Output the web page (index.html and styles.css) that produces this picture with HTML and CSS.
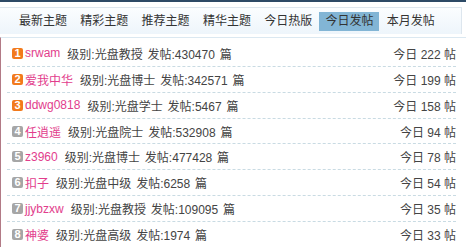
FILE: index.html
```html
<!DOCTYPE html>
<html lang="zh-CN">
<head>
    <meta charset="UTF-8">
    <title>今日发帖</title>
    <link rel="stylesheet" href="styles.css">
</head>
<body>
    <div class="topline"></div>
    <div class="tabs">
        <span class="tab">最新主题</span>
        <span class="tab">精彩主题</span>
        <span class="tab">推荐主题</span>
        <span class="tab">精华主题</span>
        <span class="tab">今日热版</span>
        <span class="tab active">今日发帖</span>
        <span class="tab">本月发帖</span>
    </div>
    <ul class="rank">
        <li><span class="num top">1</span><a class="name">srwam</a><span class="info">级别:光盘教授 发帖:430470 篇</span><span class="today">今日 222 帖</span></li>
        <li><span class="num top">2</span><a class="name">爱我中华</a><span class="info">级别:光盘博士 发帖:342571 篇</span><span class="today">今日 199 帖</span></li>
        <li><span class="num top">3</span><a class="name">ddwg0818</a><span class="info">级别:光盘学士 发帖:5467 篇</span><span class="today">今日 158 帖</span></li>
        <li><span class="num">4</span><a class="name">任逍遥</a><span class="info">级别:光盘院士 发帖:532908 篇</span><span class="today">今日 94 帖</span></li>
        <li><span class="num">5</span><a class="name">z3960</a><span class="info">级别:光盘博士 发帖:477428 篇</span><span class="today">今日 78 帖</span></li>
        <li><span class="num">6</span><a class="name">扣子</a><span class="info">级别:光盘中级 发帖:6258 篇</span><span class="today">今日 54 帖</span></li>
        <li><span class="num">7</span><a class="name">jjybzxw</a><span class="info">级别:光盘教授 发帖:109095 篇</span><span class="today">今日 35 帖</span></li>
        <li><span class="num">8</span><a class="name">神婆</a><span class="info">级别:光盘高级 发帖:1974 篇</span><span class="today">今日 33 帖</span></li>
    </ul>
</body>
</html>
```

FILE: styles.css
```css
body {
    font-family: "Liberation Sans", "Noto Sans CJK SC", sans-serif;
    font-size: 12px;
    color: #444;
    background: #fff;
    margin: 0;
    padding: 0;
}
.topline {
    height: 2px;
    background: #2d4a66;
    margin-bottom: 5px;
}
.tabs {
    display: flex;
    align-items: center;
    gap: 1.3px;
    height: 26px;
    padding-left: 13px;
    margin-right: 4px;
    border-top: 1px solid #dde6ee;
    border-right: 1px solid #dde6ee;
    background: linear-gradient(#fbfdff, #eef5fb);
}
.tab {
    width: 48px;
    padding: 0 6px;
    height: 19px;
    line-height: 19px;
    margin-top: 1px;
    color: #333;
    white-space: nowrap;
}
.tab.active {
    background: #82b5d5;
}
.rank {
    list-style: none;
    margin: 3px 0 0;
    padding: 3px 0 0;
    border-top: 1px solid #dbe8f1;
    border-left: 1px solid #b27a86;
}
.rank li {
    display: flex;
    align-items: center;
    height: 24.86px;
    margin: 0 10px 0 6px;
    padding-left: 5px;
    border-bottom: 1px dashed #c9dbe3;
}
.rank li:last-child {
    border-bottom: none;
}
.num {
    width: 11px;
    height: 11px;
    line-height: 11px;
    border-radius: 2px;
    background: #a6a6a6;
    color: #fff;
    font-size: 11px;
    font-weight: bold;
    text-align: center;
    margin-right: 2px;
}
.num.top {
    background: #f27a1c;
}
.name {
    color: #e23d8c;
    margin-right: 7px;
}
.info {
    flex: 1;
    white-space: nowrap;
    word-spacing: 1.5px;
}
.today {
    color: #444;
    white-space: nowrap;
}
```
